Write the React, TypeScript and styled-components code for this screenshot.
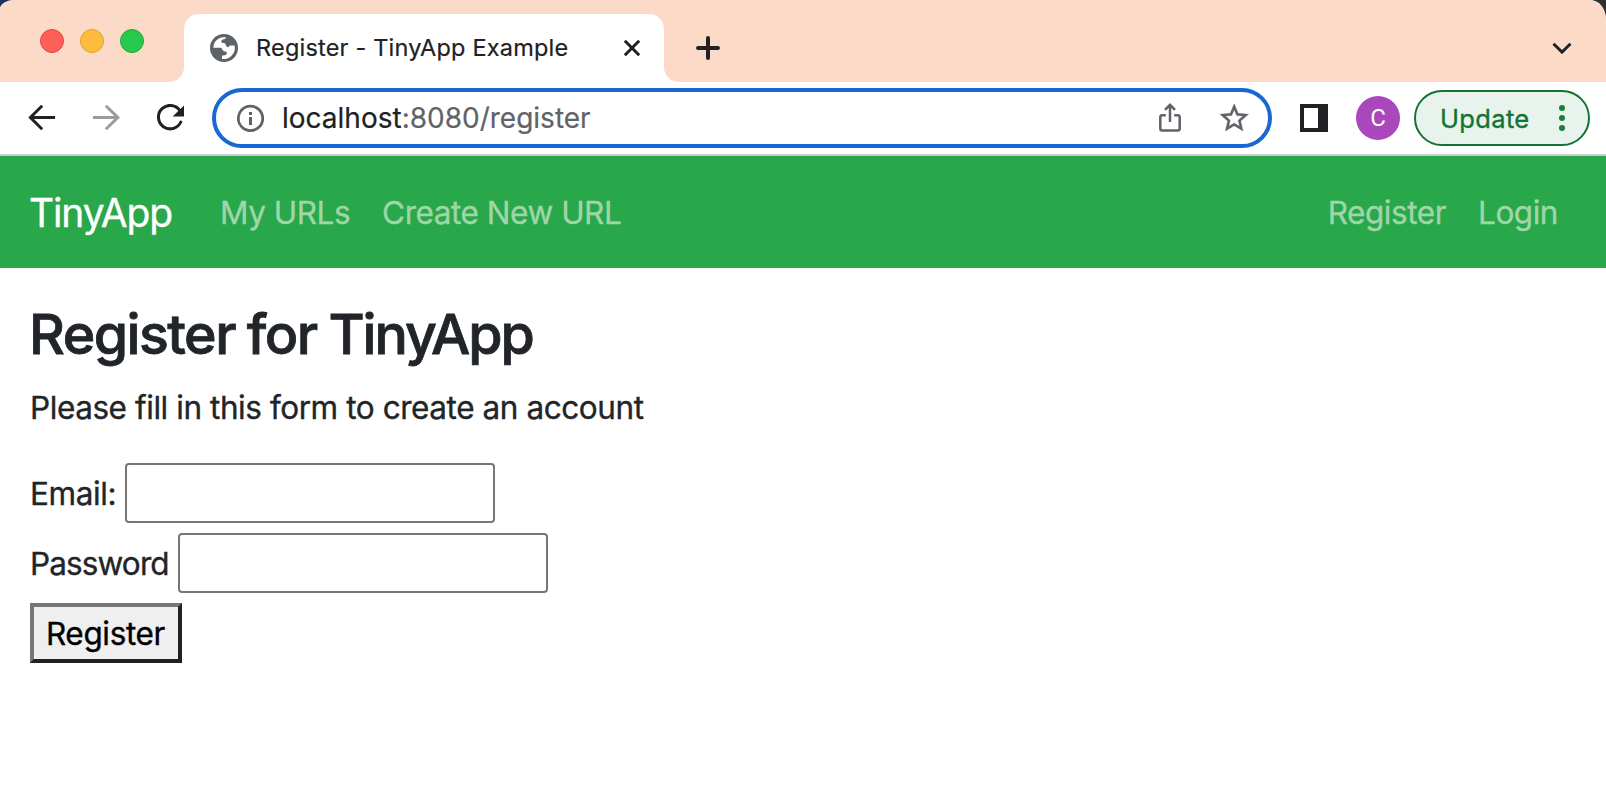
import React from 'react';
import styled, { createGlobalStyle } from 'styled-components';

const GlobalStyle = createGlobalStyle`
  *, *::before, *::after { box-sizing: border-box; }
  body {
    margin: 0;
    background: linear-gradient(90deg, #14365e 0 50%, #2f2f31 50%);
    font-family: Inter, "Liberation Sans", sans-serif;
    -webkit-text-stroke: 0.35px currentColor;
    color: #212529;
  }
`;

const Window = styled.div`
  display: flex;
  flex-direction: column;
  height: 792px;
  overflow: hidden;
  background: #fff;
  border-radius: 14px 16px 0 0 / 9px 20px 0 0;
`;

const TabStrip = styled.header`
  display: flex;
  align-items: stretch;
  height: 82px;
  background: #fcdac8;
`;

const TrafficLights = styled.div`
  display: flex;
  gap: 16px;
  padding: 29px 40px 0;
  width: 184px;
`;

const Light = styled.span<{ $fill: string; $edge: string }>`
  width: 24px;
  height: 24px;
  border-radius: 50%;
  background: ${(p) => p.$fill};
  border: 1px solid ${(p) => p.$edge};
`;

const Tab = styled.div`
  position: relative;
  display: flex;
  align-items: center;
  width: 480px;
  margin-top: 14px;
  padding: 0 24px 0 26px;
  background: #fff;
  border-radius: 15px 15px 0 0;

  &::before,
  &::after {
    content: '';
    position: absolute;
    bottom: 0;
    width: 15px;
    height: 15px;
  }
  &::before {
    right: 100%;
    background: radial-gradient(circle at 0 0, transparent 14.5px, #fff 15.5px);
  }
  &::after {
    left: 100%;
    background: radial-gradient(circle at 100% 0, transparent 14.5px, #fff 15.5px);
  }
`;

const TabTitle = styled.span`
  flex: 1;
  margin-left: 18px;
  font-size: 23.5px;
  line-height: 30px;
  letter-spacing: 0.2px;
  -webkit-text-stroke-width: 0.2px;
  color: #202124;
  white-space: nowrap;
`;

const NewTab = styled.div`
  display: flex;
  flex: 1;
  align-items: center;
  justify-content: space-between;
  padding: 14px 34px 0 32px;
`;

const Toolbar = styled.div`
  display: flex;
  align-items: center;
  height: 74px;
  padding: 0 16px 0 28px;
  border-bottom: 2px solid #c9cbcd;
`;

const NavButtons = styled.div`
  display: flex;
  gap: 36px;
  margin-right: 27px;
`;

const Omnibox = styled.div`
  display: flex;
  align-items: center;
  width: 1060px;
  height: 60px;
  padding: 0 17px 0 21px;
  border: 4px solid #1967d2;
  border-radius: 30px;
`;

const Url = styled.span`
  flex: 1;
  margin-left: 17px;
  font-size: 28px;
  line-height: 36px;
  -webkit-text-stroke-width: 0.2px;
  color: #5f6368;
`;

const Host = styled.span`
  color: #202124;
  -webkit-text-stroke-color: #202124;
`;

const OmniboxActions = styled.div`
  display: flex;
  align-items: center;
  gap: 36px;
`;

const SidePanelIcon = styled.span`
  width: 28px;
  height: 28px;
  margin: 0 28px;
  border: solid #202124;
  border-width: 4px 10px 4px 4px;
`;

const Avatar = styled.span`
  display: flex;
  align-items: center;
  justify-content: center;
  width: 44px;
  height: 44px;
  margin-right: 14px;
  border-radius: 50%;
  background: #ab47bc;
  color: #fff;
  font: 24px/44px Roboto, sans-serif;
  -webkit-text-stroke-width: 0;
`;

const UpdateButton = styled.div`
  display: flex;
  align-items: center;
  justify-content: space-between;
  width: 176px;
  height: 56px;
  padding: 0 23px 0 24px;
  border: 2px solid #137333;
  border-radius: 28px;
  background: #e9f3ed;
  color: #137333;
  -webkit-text-stroke-color: #137333;
  font-size: 25.5px;
  letter-spacing: 0.35px;
`;

const Dots = styled.span`
  display: flex;
  flex-direction: column;
  gap: 4px;

  i {
    width: 6px;
    height: 6px;
    border-radius: 50%;
    background: #188038;
  }
`;

const Navbar = styled.nav`
  display: flex;
  align-items: center;
  height: 112px;
  padding: 2px 48px 0 29px;
  background: #28a74b;
`;

const Brand = styled.a`
  margin-right: 48px;
  color: #fff;
  -webkit-text-stroke-color: #fff;
  font-size: 39px;
  line-height: 60px;
  letter-spacing: -1.15px;
`;

const NavLinks = styled.div`
  display: flex;
  gap: 32px;

  & + & {
    margin-left: auto;
  }
`;

const NavLink = styled.a`
  color: #9fd6a8;
  -webkit-text-stroke-color: #9fd6a8;
  font-size: 31.5px;
  line-height: 48px;
  letter-spacing: -0.46px;
`;

const Content = styled.main`
  padding: 32px 30px;
`;

const Heading = styled.h3`
  margin: 0 0 17px -1px;
  font-size: 55.5px;
  font-weight: 500;
  line-height: 67px;
  letter-spacing: -1.55px;
  word-spacing: -1.5px;
  -webkit-text-stroke-width: 0.8px;
`;

const ProductName = styled.span`
  letter-spacing: -2.1px;
`;

const Lead = styled.p`
  margin: 0 0 31px;
  font-size: 31.5px;
  line-height: 48px;
  letter-spacing: -0.43px;
`;

const Form = styled.form`
  display: flex;
  flex-direction: column;
  align-items: flex-start;
  gap: 10px;
  font-size: 31.5px;
`;

const Field = styled.div<{ $label: number; $tracking: number }>`
  display: grid;
  grid-template-columns: ${(p) => p.$label}px 370px;
  align-items: center;

  label {
    padding-top: 2px;
    line-height: 48px;
    letter-spacing: ${(p) => p.$tracking}px;
    white-space: nowrap;
  }
`;

const Input = styled.input`
  height: 60px;
  margin: 0;
  border: 2px solid #767676;
  border-radius: 4px;
  background: #fff;
  font: inherit;
  outline: none;
`;

const Submit = styled.button`
  width: 152px;
  height: 60px;
  margin: 0;
  padding: 2px 1px 0 0;
  border: 4px solid;
  border-color: #767676 #212121 #212121 #767676;
  background: #efefef;
  color: #000;
  font: 31.5px/48px Inter, sans-serif;
  letter-spacing: -0.35px;
`;

const Globe = () => (
  <svg width="28" height="28" viewBox="0 0 28 28">
    <circle cx="14" cy="14" r="14" fill="#5f6368" />
    <path
      fill="#fff"
      d="M3.2 13.8A10.8 10.8 0 0 1 12.4 3.3L16 3.2C15.6 4.8 14.4 5.3 12.8 5.6C11.2 6 11 8 12 8.7C13.2 9.3 14.6 8.6 15.3 9.8C16 11 15.8 12.6 17.8 13.2C19 13.4 19 11.7 20.6 11.6H24.5A10.8 10.8 0 0 1 12 24.8V21.4C14 21.6 16.4 21.6 16.8 19.6C17 17.9 16 17.4 14.2 17.3C12 17.1 12.8 13.8 10 13.8Z"
    />
  </svg>
);

const Cross = () => (
  <svg width="16" height="16" viewBox="0 0 16 16" stroke="#202124" strokeWidth="3">
    <path d="M.8.8l14.4 14.4M15.2.8L.8 15.2" />
  </svg>
);

const Plus = () => (
  <svg width="24" height="24" viewBox="0 0 24 24" stroke="#202124" strokeWidth="4" strokeLinecap="round">
    <path d="M12 2v20M2 12h20" />
  </svg>
);

const Chevron = () => (
  <svg width="20" height="12" viewBox="0 0 20 12" fill="none" stroke="#202124" strokeWidth="3">
    <path d="M1.5 1.7L10 10.1l8.5-8.4" />
  </svg>
);

const Arrow = ({ forward = false }: { forward?: boolean }) => (
  <svg width="28" height="28" viewBox="0 0 28 28" fill="none" stroke={forward ? '#9b9b9b' : '#202124'} strokeWidth="3">
    <path d={forward ? 'M1 13.5h25M13.8 1.8L25.8 13.5L13.8 25.2' : 'M27 13.5H2.4M14.2 1.8L2.4 13.5L14.2 25.2'} />
  </svg>
);

const Reload = () => (
  <svg width="29" height="28" viewBox="0 0 29 28">
    <path d="M24 6.8A11.7 11.7 0 1 0 24.8 18" fill="none" stroke="#202124" strokeWidth="3" strokeLinecap="round" />
    <path d="M28 1.4v11H16.6z" fill="#202124" />
  </svg>
);

const Info = () => (
  <svg width="28" height="28" viewBox="0 0 28 28">
    <circle cx="13.5" cy="14.4" r="12.2" fill="none" stroke="#5f6368" strokeWidth="2.8" />
    <path d="M12 8h3v3h-3zM12 13h3v8h-3z" fill="#5f6368" />
  </svg>
);

const Share = () => (
  <svg width="22" height="29" viewBox="0 0 22 29" fill="none" stroke="#5f6368" strokeWidth="2.5">
    <path d="M6.8 12.2H3a1.9 1.9 0 0 0-1.7 1.9v11.5a2 2 0 0 0 2 2h15.4a2 2 0 0 0 2-2V14.1a1.9 1.9 0 0 0-1.7-1.9h-3.8M11 19V2M6 6.8L11 1.8l5 5" />
  </svg>
);

const Star = () => (
  <svg width="34.4" height="34.4" viewBox="0 0 24 24" fill="#5f6368" stroke="#5f6368" strokeWidth="0.25">
    <path d="M22 9.24l-7.19-.62L12 2 9.19 8.63 2 9.24l5.46 4.73L5.82 21 12 17.27 18.18 21l-1.63-7.03L22 9.24zM12 15.4l-3.76 2.27 1-4.28-3.32-2.88 4.38-.38L12 6.1l1.71 4.04 4.38.38-3.32 2.88 1 4.28L12 15.4z" />
  </svg>
);

export default function App() {
  return (
    <>
      <GlobalStyle />
      <Window>
        <TabStrip>
          <TrafficLights>
            <Light $fill="#ff5f57" $edge="#e14640" />
            <Light $fill="#febc3c" $edge="#dea034" />
            <Light $fill="#28c84c" $edge="#1aab35" />
          </TrafficLights>
          <Tab>
            <Globe />
            <TabTitle>Register - TinyApp Example</TabTitle>
            <Cross />
          </Tab>
          <NewTab>
            <Plus />
            <Chevron />
          </NewTab>
        </TabStrip>
        <Toolbar>
          <NavButtons>
            <Arrow />
            <Arrow forward />
            <Reload />
          </NavButtons>
          <Omnibox>
            <Info />
            <Url>
              <Host>localhost</Host>:8080/register
            </Url>
            <OmniboxActions>
              <Share />
              <Star />
            </OmniboxActions>
          </Omnibox>
          <SidePanelIcon />
          <Avatar>C</Avatar>
          <UpdateButton>
            Update
            <Dots>
              <i />
              <i />
              <i />
            </Dots>
          </UpdateButton>
        </Toolbar>
        <Navbar>
          <Brand>TinyApp</Brand>
          <NavLinks>
            <NavLink>My URLs</NavLink>
            <NavLink>Create New URL</NavLink>
          </NavLinks>
          <NavLinks>
            <NavLink>Register</NavLink>
            <NavLink>Login</NavLink>
          </NavLinks>
        </Navbar>
        <Content>
          <Heading>
            Register for <ProductName>TinyApp</ProductName>
          </Heading>
          <Lead>Please fill in this form to create an account</Lead>
          <Form>
            <Field $label={95} $tracking={-0.4}>
              <label htmlFor="email">Email:</label>
              <Input id="email" type="email" />
            </Field>
            <Field $label={148} $tracking={-0.88}>
              <label htmlFor="password">Password</label>
              <Input id="password" type="password" />
            </Field>
            <Submit type="button">Register</Submit>
          </Form>
        </Content>
      </Window>
    </>
  );
}
